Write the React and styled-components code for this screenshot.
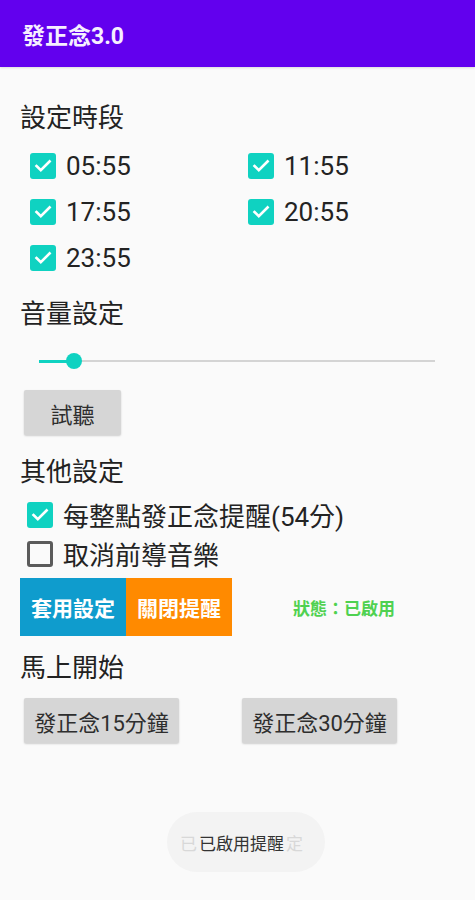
import styled, { createGlobalStyle } from "styled-components";

const GlobalStyle = createGlobalStyle`
  html, body {
    margin: 0;
    padding: 0;
    background: #fafafa;
    font-family: Roboto, "Noto Sans CJK TC", sans-serif;
  }
`;

const times = ["05:55", "11:55", "17:55", "20:55", "23:55"];

const Check = ({ checked }) => (
  <Box $checked={checked}>
    {checked && (
      <svg width="26" height="26" viewBox="0 0 26 26">
        <path
          d="M6.5 13 L10.8 17.2 L19.6 8.4"
          fill="none"
          stroke="#fff"
          strokeWidth="2.6"
          strokeLinecap="square"
        />
      </svg>
    )}
  </Box>
);

const App = () => {
  return (
    <Screen>
      <GlobalStyle />
      <AppBar>發正念3.0</AppBar>
      <Content>
        <Title $top={34}>設定時段</Title>
        <TimeGrid>
          {times.map((t) => (
            <Option key={t} $height={46}>
              <Check checked />
              <Label>{t}</Label>
            </Option>
          ))}
        </TimeGrid>

        <Title $top={16}>音量設定</Title>
        <Slider>
          <ActiveTrack />
          <Thumb />
          <RestTrack />
        </Slider>
        <GrayButton $width={97} $left={4} $top={14}>
          試聽
        </GrayButton>

        <Title $top={20}>其他設定</Title>
        <OtherList>
          <Option $height={39}>
            <Check checked />
            <Label>每整點發正念提醒(54分)</Label>
          </Option>
          <Option $height={39}>
            <Check />
            <Label>取消前導音樂</Label>
          </Option>
        </OtherList>

        <ActionRow>
          <ColorButton $bg="#0f9ccd">套用設定</ColorButton>
          <ColorButton $bg="#ff8a00">關閉提醒</ColorButton>
          <Status>狀態：已啟用</Status>
        </ActionRow>

        <Title $top={15}>馬上開始</Title>
        <StartRow>
          <GrayButton $width={155}>發正念15分鐘</GrayButton>
          <GrayButton $width={155}>發正念30分鐘</GrayButton>
        </StartRow>
      </Content>

      <Toast>
        <Ghost>已</Ghost>
        已啟用提醒
        <Ghost>定</Ghost>
      </Toast>
    </Screen>
  );
};

export default App;

const Screen = styled.div`
  min-height: 900px;
  background: #fafafa;
`;

const AppBar = styled.div`
  height: 67px;
  background: #6200ee;
  color: #f6efff;
  font-size: 23px;
  font-weight: 700;
  display: flex;
  align-items: center;
  padding-left: 22px;
  box-shadow: 0 1px 2px rgba(0, 0, 0, 0.12);
`;

const Content = styled.div`
  padding-left: 20px;
  display: flex;
  flex-direction: column;
  align-items: flex-start;
`;

const Title = styled.div`
  margin-top: ${(p) => p.$top}px;
  font-size: 26px;
  line-height: 34px;
  height: 34px;
  color: #222;
`;

const TimeGrid = styled.div`
  margin-top: 8px;
  margin-left: 10px;
  display: grid;
  grid-template-columns: 218px 180px;
`;

const Option = styled.div`
  height: ${(p) => p.$height}px;
  display: flex;
  align-items: center;
  gap: 10px;
`;

const Box = styled.div`
  width: 26px;
  height: 26px;
  box-sizing: border-box;
  border-radius: 3px;
  flex: none;
  display: flex;
  align-items: center;
  justify-content: center;
  background: ${(p) => (p.$checked ? "#0fd2c1" : "transparent")};
  border: ${(p) => (p.$checked ? "none" : "3px solid #5b5b5b")};
`;

const Label = styled.span`
  font-size: 26px;
  color: #232323;
  white-space: nowrap;
`;

const Slider = styled.div`
  margin-top: 15px;
  margin-left: 19px;
  width: 396px;
  height: 30px;
  display: flex;
  align-items: center;
`;

const ActiveTrack = styled.div`
  width: 35px;
  height: 3px;
  background: #0fd2c1;
`;

const Thumb = styled.div`
  width: 16px;
  height: 16px;
  border-radius: 50%;
  background: #0fd2c1;
  margin: 0 -8px;
  z-index: 1;
  flex: none;
`;

const RestTrack = styled.div`
  flex: 1;
  height: 2px;
  background: #d4d4d4;
`;

const GrayButton = styled.div`
  width: ${(p) => p.$width}px;
  height: 45px;
  margin-left: ${(p) => p.$left || 0}px;
  margin-top: ${(p) => p.$top || 0}px;
  background: #d6d6d6;
  border-radius: 2px;
  box-shadow: 0 1px 2px rgba(0, 0, 0, 0.18);
  display: flex;
  align-items: center;
  justify-content: center;
  font-size: 22px;
  color: #2e2e2e;
  white-space: nowrap;
`;

const OtherList = styled.div`
  margin-top: 6px;
  margin-left: 7px;
  display: flex;
  flex-direction: column;
`;

const ActionRow = styled.div`
  margin-top: 5px;
  display: flex;
  align-items: center;
`;

const ColorButton = styled.div`
  width: 106px;
  height: 58px;
  background: ${(p) => p.$bg};
  color: #fff;
  font-size: 21px;
  font-weight: 700;
  display: flex;
  align-items: center;
  justify-content: center;
`;

const Status = styled.div`
  margin-left: 61px;
  font-size: 17px;
  font-weight: 700;
  color: #4fd150;
`;

const StartRow = styled.div`
  margin-top: 13px;
  margin-left: 4px;
  display: flex;
  gap: 63px;
`;

const Toast = styled.div`
  position: fixed;
  bottom: 28px;
  left: 167px;
  width: 158px;
  height: 60px;
  box-sizing: border-box;
  padding-left: 11px;
  border-radius: 30px;
  background: #f3f3f3;
  display: flex;
  align-items: center;
  font-size: 17px;
  color: #333;
  white-space: nowrap;
`;

const Ghost = styled.span`
  color: #d8d8d8;
  margin: 0 2px;
`;
